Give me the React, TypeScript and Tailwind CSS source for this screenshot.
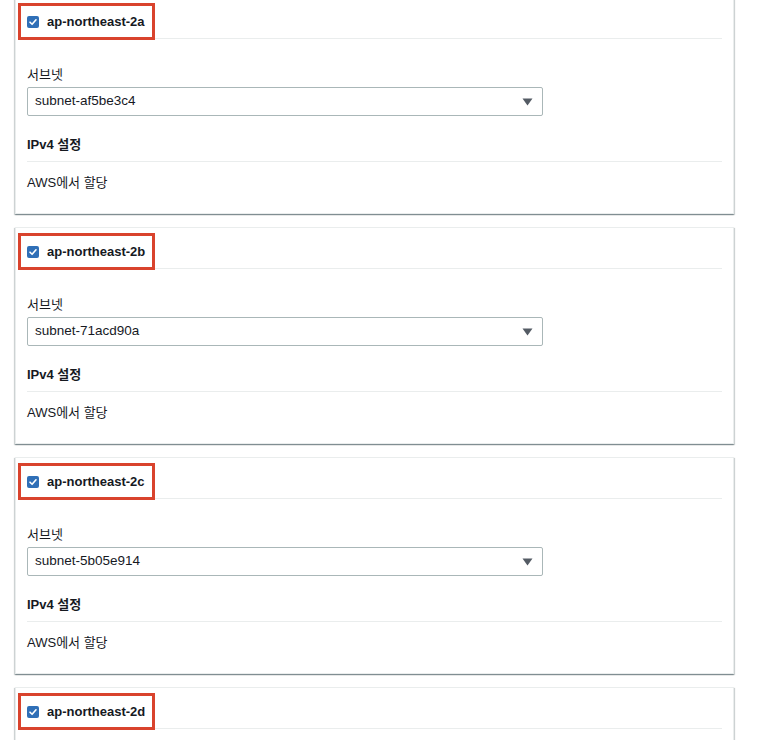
const zones = [
  { az: "ap-northeast-2a", subnet: "subnet-af5be3c4" },
  { az: "ap-northeast-2b", subnet: "subnet-71acd90a" },
  { az: "ap-northeast-2c", subnet: "subnet-5b05e914" },
  { az: "ap-northeast-2d", subnet: "" },
];

function CheckBox() {
  return (
    <span className="flex h-[12px] w-[12px] items-center justify-center rounded-[2px] bg-[#2f6fb7]">
      <svg width="10" height="10" viewBox="0 0 10 10" fill="none">
        <path
          d="M2 5.2 L4.1 7.3 L8 2.8"
          stroke="#fff"
          strokeWidth="1.6"
          strokeLinecap="round"
          strokeLinejoin="round"
        />
      </svg>
    </span>
  );
}

function ZoneCard({ az, subnet }: { az: string; subnet: string }) {
  return (
    <div className="mb-[13px] w-[719px] border border-[#eaeded] bg-white shadow-[0_1px_1px_0_rgba(0,28,36,0.3),1px_1px_1px_0_rgba(0,28,36,0.15),-1px_1px_1px_0_rgba(0,28,36,0.15)]">
      <div className="px-[11px]">
        <div className="relative flex items-center gap-[8px] border-b border-[#eaeded] pt-[16px] pb-[8px]">
          <CheckBox />
          <span className="text-[13px] leading-[16px] font-bold text-[#16191f]">{az}</span>
          <div className="absolute -left-[9px] top-[5px] h-[37px] w-[137px] border-[3px] border-[#d9432d]" />
        </div>

        {subnet ? (
          <>
            <p className="mt-[28px] text-[13px] leading-[16px] text-[#16191f]">서브넷</p>
            <div className="mt-[4px] flex h-[29px] w-[516px] items-center justify-between rounded-[2px] border border-[#aab7b8] px-[7px]">
              <span className="text-[13.5px] text-[#16191f]">{subnet}</span>
              <svg width="11" height="8" viewBox="0 0 11 8" className="mr-[2px]">
                <path d="M0.5 0.5 H10.5 L5.5 7.5 Z" fill="#545b64" />
              </svg>
            </div>

            <div className="mt-[21px] border-b border-[#eaeded] pb-[8px]">
              <p className="text-[13px] leading-[16px] font-bold text-[#16191f]">IPv4 설정</p>
            </div>
            <p className="mt-[13px] pb-[22px] text-[13px] leading-[16px] text-[#16191f]">AWS에서 할당</p>
          </>
        ) : (
          <div className="h-[60px]" />
        )}
      </div>
    </div>
  );
}

export default function App() {
  return (
    <div
      className="h-[740px] w-[768px] overflow-hidden bg-white"
      style={{ fontFamily: '"Liberation Sans", "Noto Sans CJK KR", sans-serif' }}
    >
      <div className="-mt-[3px] ml-[15px]">
        {zones.map((z) => (
          <ZoneCard key={z.az} az={z.az} subnet={z.subnet} />
        ))}
      </div>
    </div>
  );
}
